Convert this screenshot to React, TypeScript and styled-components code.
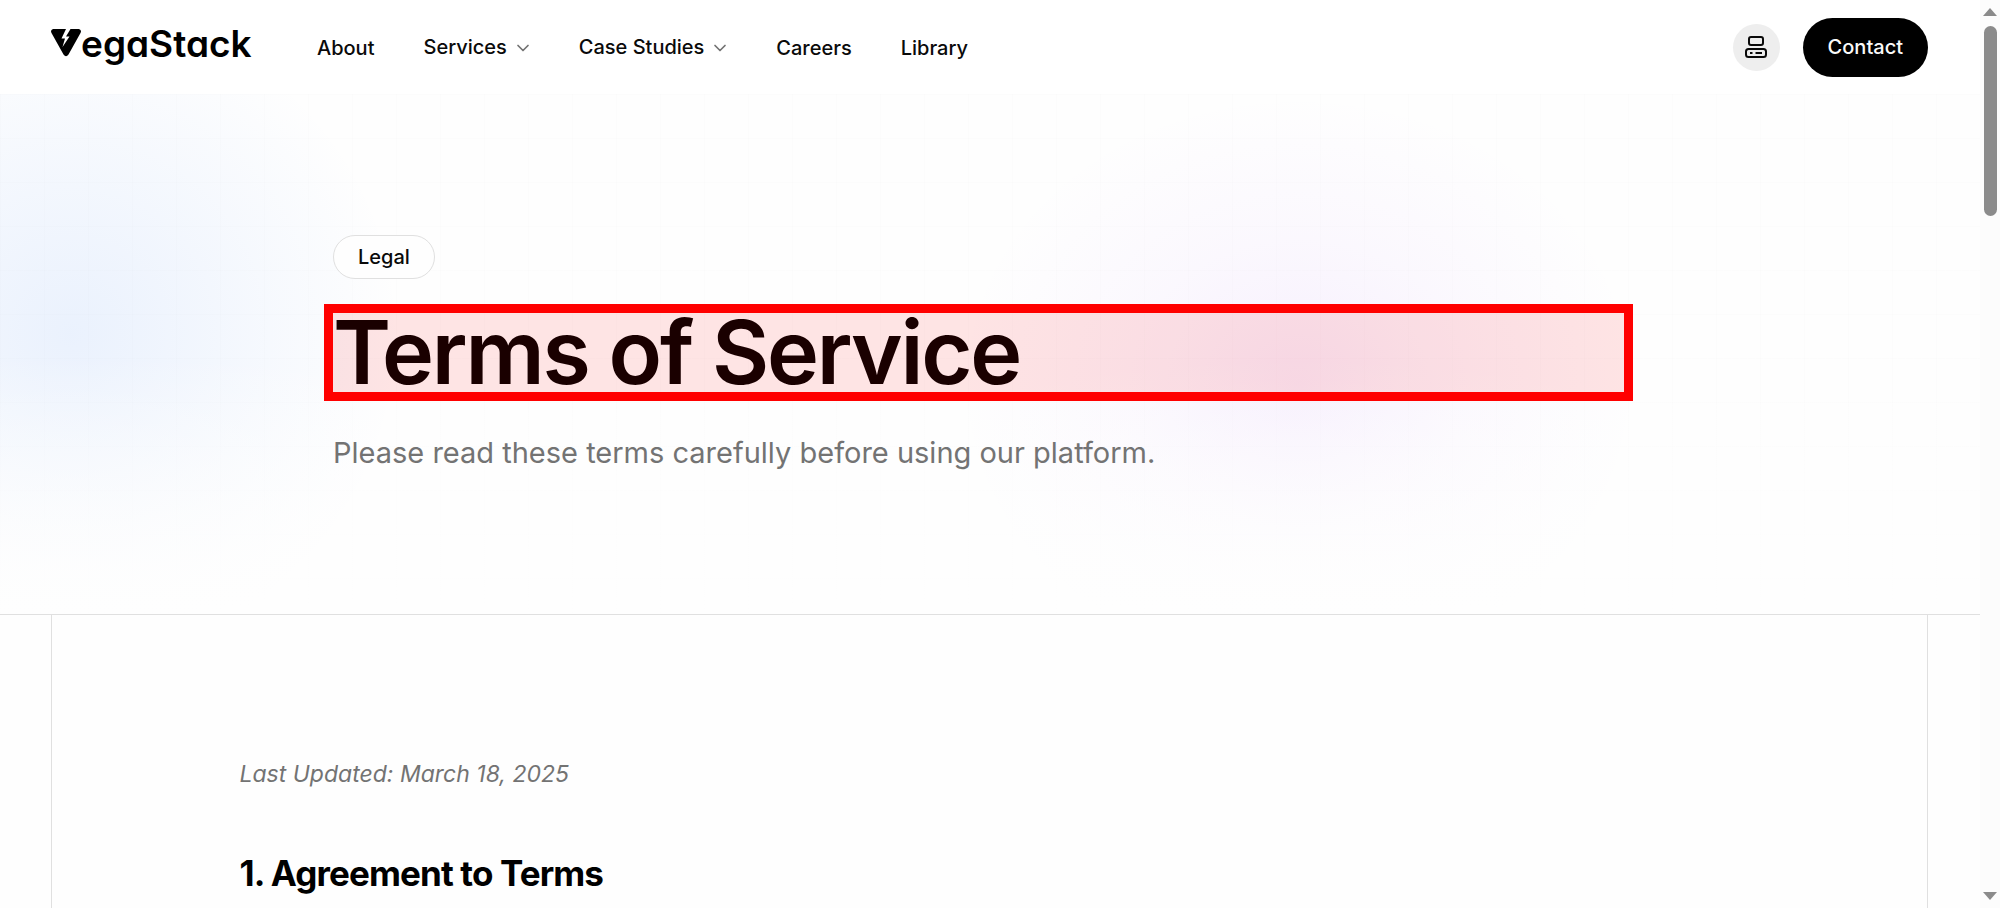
import React from "react";
import styled, { createGlobalStyle } from "styled-components";

const GlobalStyle = createGlobalStyle`
  *, *::before, *::after { box-sizing: border-box; }
  body {
    margin: 0;
    background: #fefefe;
    color: #0a0a0a;
    font-family: Inter, "Liberation Sans", sans-serif;
  }
`;

const Page = styled.div`
  display: flex;
  flex-direction: column;
  min-height: 100vh;
  padding-right: 20px;
`;

const Header = styled.header`
  display: flex;
  align-items: center;
  height: 94px;
  padding: 0 52px 0 51px;
  background: #ffffff;
`;

const Logo = styled.a`
  display: flex;
  align-items: flex-start;
  width: 202px;
  margin: 0 64px 6px 0;
  color: #000000;
  text-decoration: none;
`;

const LogoMark = styled.svg`
  flex: none;
  width: 30px;
  height: 28px;
  margin-top: 6px;
`;

const LogoText = styled.span`
  font-size: 37px;
  line-height: 42px;
  font-weight: 600;
  font-feature-settings: "cv11";
`;

const Nav = styled.nav`
  display: flex;
  align-items: center;
  gap: 49px;
`;

const NavLink = styled.a`
  padding-top: 2px;
  font-size: 20px;
  line-height: 28px;
  font-weight: 500;
  color: #0a0a0a;
  text-decoration: none;
`;

const NavButton = styled.button`
  display: flex;
  align-items: center;
  gap: 9px;
  padding: 0;
  border: 0;
  background: none;
  color: #0a0a0a;
  font: 500 20px/28px Inter, "Liberation Sans", sans-serif;
`;

const Chevron = styled.svg`
  width: 14px;
  height: 8px;
  margin-top: 2px;
`;

const Actions = styled.div`
  display: flex;
  align-items: center;
  gap: 23px;
  margin-left: auto;
`;

const IconButton = styled.button`
  display: grid;
  place-items: center;
  width: 47px;
  height: 47px;
  padding: 0;
  border: 0;
  border-radius: 50%;
  background: #eeeeee;
  color: #0a0a0a;
`;

const ContactLink = styled.a`
  padding: 15px 25px 16px;
  border-radius: 30px;
  background: #000000;
  color: #fafafa;
  font-size: 20px;
  line-height: 28px;
  font-weight: 500;
  text-decoration: none;
`;

const Hero = styled.section`
  padding: 141px 52px 140px;
  border-bottom: 1px solid #e0e0e0;
  background:
    linear-gradient(to bottom, rgba(254, 254, 254, 0) 50%, rgba(254, 254, 254, 1) 100%),
    radial-gradient(circle at 71px 240px, rgba(59, 130, 246, 0.1), rgba(59, 130, 246, 0) 330px),
    radial-gradient(340px 290px at 1298px 290px, rgba(168, 85, 247, 0.09), rgba(168, 85, 247, 0.035) 50%, rgba(168, 85, 247, 0) 100%),
    repeating-linear-gradient(to right, rgba(0, 0, 0, 0.006) 0 1px, transparent 1px 44px),
    repeating-linear-gradient(to bottom, rgba(0, 0, 0, 0.006) 0 1px, transparent 1px 44px),
    #fefefe;
`;

const HeroInner = styled.div`
  display: flex;
  flex-direction: column;
  align-items: flex-start;
  max-width: 1314px;
  margin: 0 auto;
`;

const Badge = styled.span`
  padding: 7px 24px;
  border: 1px solid #e0e0e0;
  border-radius: 22px;
  background: #fefefe;
  font-size: 20px;
  line-height: 28px;
  font-weight: 500;
`;

const Title = styled.h1`
  width: 100%;
  max-width: 1291px;
  margin: 34px 0 0;
  outline: 9px solid #ff0000;
  background: rgba(255, 0, 0, 0.1);
  color: #1a0000;
  font-size: 88px;
  line-height: 79px;
  font-weight: 600;
  letter-spacing: -0.025em;
`;

const Subtitle = styled.p`
  margin: 40px 0 0;
  color: #737373;
  font-size: 29px;
  line-height: 42px;
`;

const Frame = styled.main`
  flex: 1;
  margin: 0 52px 0 51px;
  border: solid #e0e0e0;
  border-width: 0 1px;
`;

const Article = styled.article`
  max-width: 1500px;
  margin: 0 auto;
  padding-top: 140px;
`;

const Updated = styled.p`
  margin: 0;
  color: #737373;
  font-size: 23px;
  line-height: 38px;
  font-style: italic;
`;

const SectionTitle = styled.h2`
  margin: 58px 0 0;
  color: #000000;
  font-size: 35px;
  line-height: 44px;
  font-weight: 700;
  letter-spacing: -0.025em;
`;

const ScrollTrack = styled.div`
  position: fixed;
  top: 0;
  right: 0;
  bottom: 0;
  display: flex;
  flex-direction: column;
  align-items: center;
  width: 20px;
  padding: 8px 0;
  background: #fcfcfc;
`;

const ScrollArrow = styled.span<{ $down?: boolean }>`
  width: 14px;
  height: 8px;
  background: #8b8b8b;
  clip-path: ${(p) => (p.$down ? "polygon(0 0, 100% 0, 50% 100%)" : "polygon(50% 0, 100% 100%, 0 100%)")};
`;

const ScrollThumb = styled.span`
  width: 13px;
  height: 190px;
  margin: 10px 0 auto;
  border-radius: 7px;
  background: #8b8b8b;
`;

const navItems = [
  { label: "About" },
  { label: "Services", menu: true },
  { label: "Case Studies", menu: true },
  { label: "Careers" },
  { label: "Library" },
];

export default function App() {
  return (
    <>
      <GlobalStyle />
      <Page>
        <Header>
          <Logo href="#" aria-label="VegaStack">
            <LogoMark viewBox="0 0 30 28" aria-hidden="true">
              <path
                d="M2 0H15L10.500 9.500L14 9.500L11.500 18L18.500 7.500L15 7.500L19.500 0H28Q31 1 29.500 4L17.500 25.500Q15 29 12.500 25.500L0.500 4Q-1 1 2 0Z"
                fill="#000"
              />
            </LogoMark>
            <LogoText>egaStack</LogoText>
          </Logo>
          <Nav>
            {navItems.map((item) =>
              item.menu ? (
                <NavButton key={item.label} type="button">
                  {item.label}
                  <Chevron viewBox="-1 0 14 8" fill="none" stroke="#737373" strokeWidth="1.7" aria-hidden="true">
                    <path d="M1 1.500L6 6.500L11 1.500" strokeLinecap="round" strokeLinejoin="round" />
                  </Chevron>
                </NavButton>
              ) : (
                <NavLink key={item.label} href="#">
                  {item.label}
                </NavLink>
              )
            )}
          </Nav>
          <Actions>
            <IconButton type="button" aria-label="Theme">
              <svg width="22" height="22" viewBox="0 0 22 22" fill="none" stroke="currentColor" strokeWidth="2">
                <rect x="4" y="1" width="14" height="8" rx="2" />
                <rect x="1" y="13" width="20" height="8" rx="2.500" />
                <path d="M5 17H7.500M10.500 17H17" />
              </svg>
            </IconButton>
            <ContactLink href="#">Contact</ContactLink>
          </Actions>
        </Header>
        <Hero>
          <HeroInner>
            <Badge>Legal</Badge>
            <Title>Terms of Service</Title>
            <Subtitle>Please read these terms carefully before using our platform.</Subtitle>
          </HeroInner>
        </Hero>
        <Frame>
          <Article>
            <Updated>Last Updated: March 18, 2025</Updated>
            <SectionTitle>1. Agreement to Terms</SectionTitle>
          </Article>
        </Frame>
      </Page>
      <ScrollTrack aria-hidden="true">
        <ScrollArrow />
        <ScrollThumb />
        <ScrollArrow $down />
      </ScrollTrack>
    </>
  );
}
